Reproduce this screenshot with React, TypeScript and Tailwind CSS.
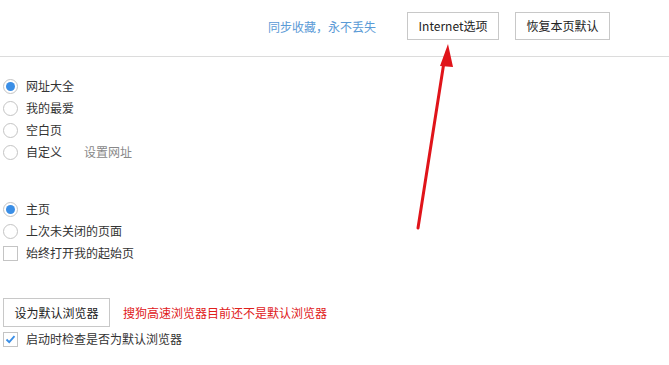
import React from 'react';

const font = { fontFamily: '"Noto Sans CJK SC", "Liberation Sans", sans-serif' };

function Radio({ checked, label, extra }: { checked?: boolean; label: string; extra?: string }) {
  return (
    <div className="flex h-[22px] items-center">
      <span className="ml-[3px] flex h-[15px] w-[15px] items-center justify-center rounded-full border border-[#c4c4c4] bg-white">
        {checked && <span className="h-[9px] w-[9px] rounded-full bg-[#3a8ee6]" />}
      </span>
      <span className="ml-[8px] text-[12px] text-[#333]">{label}</span>
      {extra && <span className="ml-[22px] text-[12px] text-[#888]">{extra}</span>}
    </div>
  );
}

function Check({ checked, label }: { checked?: boolean; label: string }) {
  return (
    <div className="flex h-[22px] items-center">
      <span className="ml-[3px] flex h-[15px] w-[15px] items-center justify-center border border-[#c4c4c4] bg-white">
        {checked && (
          <svg width="11" height="11" viewBox="0 0 11 11">
            <path d="M1.5 5.5 L4.2 8.2 L9.5 2.2" fill="none" stroke="#3a8ee6" strokeWidth="1.8" />
          </svg>
        )}
      </span>
      <span className="ml-[8px] text-[12px] text-[#333]">{label}</span>
    </div>
  );
}

export default function App() {
  return (
    <div className="relative h-[365px] w-[669px] overflow-hidden bg-white" style={font}>
      {/* Header */}
      <div className="flex h-[57px] items-start border-b border-[#dcdcdc] pl-[268px] pt-[12px]">
        <span className="mt-[6px] text-[12px] text-[#5a9ad6]">同步收藏，永不丢失</span>
        <button className="ml-[31px] h-[28px] w-[92px] border border-[#c8c8c8] bg-white text-[12px] text-[#222]">
          Internet选项
        </button>
        <button className="ml-[16px] h-[28px] w-[95px] border border-[#c8c8c8] bg-white text-[12px] text-[#222]">
          恢复本页默认
        </button>
      </div>

      {/* Home page options */}
      <div className="mt-[18px] flex flex-col">
        <Radio checked label="网址大全" />
        <Radio label="我的最爱" />
        <Radio label="空白页" />
        <Radio label="自定义" extra="设置网址" />
      </div>

      {/* Startup options */}
      <div className="mt-[35px] flex flex-col">
        <Radio checked label="主页" />
        <Radio label="上次未关闭的页面" />
        <Check label="始终打开我的起始页" />
      </div>

      {/* Default browser */}
      <div className="mt-[34px] flex items-center">
        <button className="ml-[3px] h-[29px] w-[107px] border border-[#c8c8c8] bg-white text-[12px] text-[#222]">
          设为默认浏览器
        </button>
        <span className="ml-[13px] text-[12px] text-[#e0201a]">搜狗高速浏览器目前还不是默认浏览器</span>
      </div>
      <div className="mt-[1px]">
        <Check checked label="启动时检查是否为默认浏览器" />
      </div>

      {/* Annotation arrow */}
      <svg className="absolute left-0 top-0" width="669" height="365" viewBox="0 0 669 365">
        <line x1="418" y1="228" x2="444" y2="62" stroke="#e0141a" strokeWidth="3" strokeLinecap="round" />
        <polygon points="448,44 440,66 453,67" fill="#e0141a" />
      </svg>
    </div>
  );
}
